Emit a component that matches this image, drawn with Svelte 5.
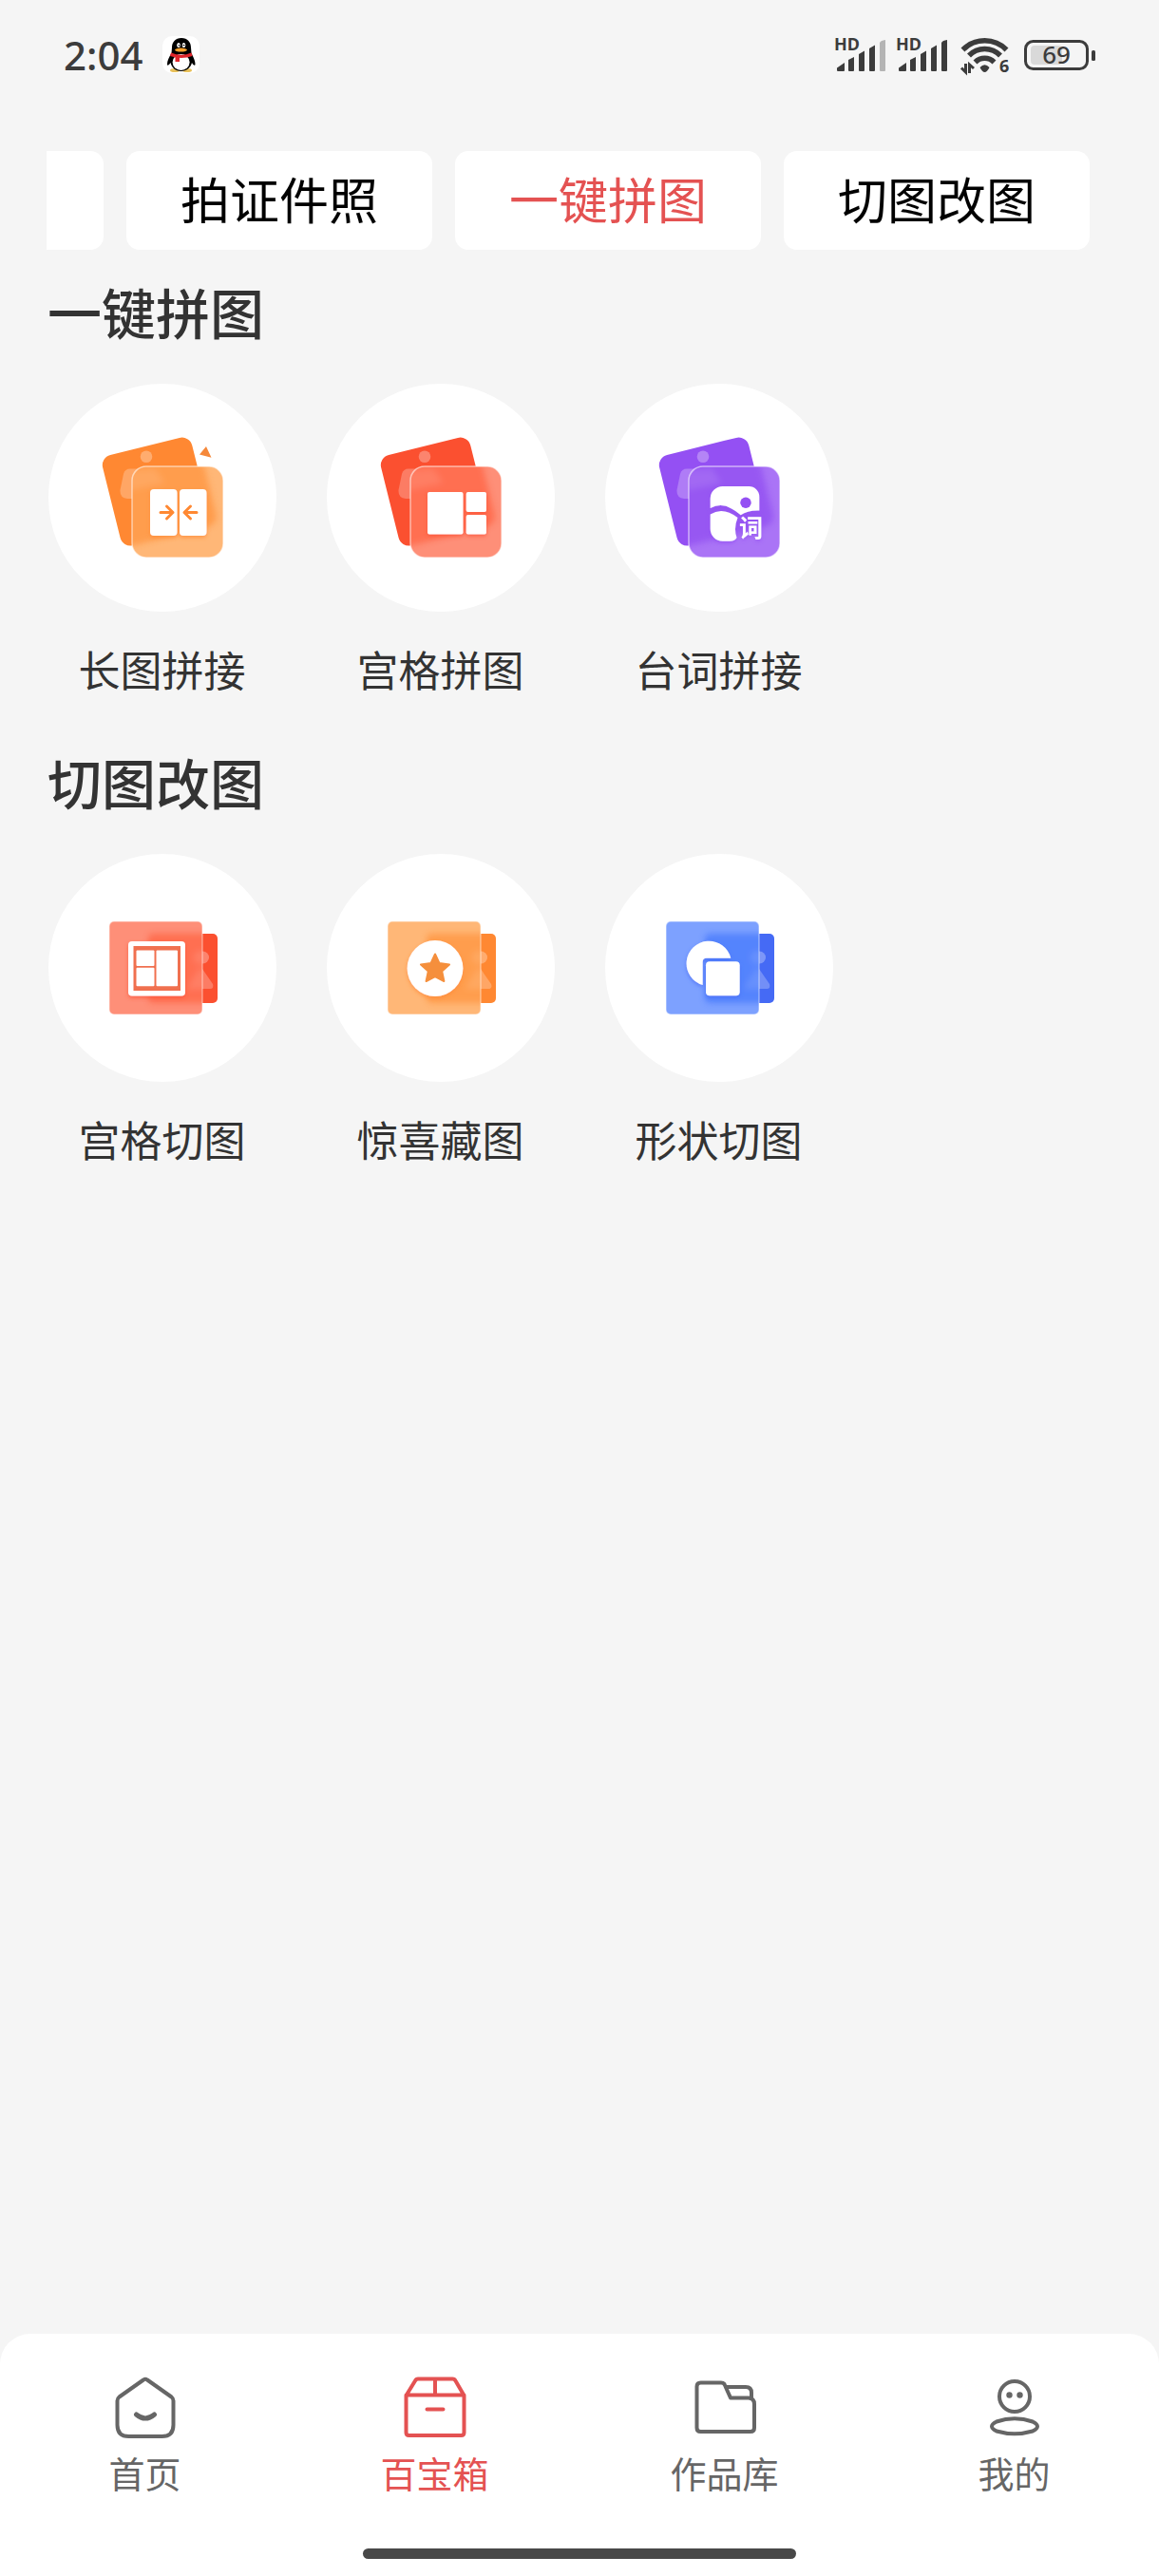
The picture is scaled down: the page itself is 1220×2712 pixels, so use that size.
<script>
  let activeTab = "puzzle";
  let activePage = "toolbox";

  const tabs = [
    { id: "hot", name: "", hint: "更多工具" },
    { id: "photo", name: "拍证件照" },
    { id: "puzzle", name: "一键拼图" },
    { id: "cut", name: "切图改图" },
  ];

  const orange = { dark: "#ff8832", light: "#ffb777", mid: "#ff9038" };
  const red = { dark: "#fb5030", light: "#fe8f78", mid: "#ff5f3e" };
  const purple = { dark: "#9450f3", light: "#aa74f6", mid: "#8e4af0" };
  const blue = { dark: "#456af5", light: "#7da1ff", mid: "#3f74fc" };

  const sections = [
    {
      title: "一键拼图",
      shape: "stack",
      tools: [
        { id: "long", name: "长图拼接", color: orange },
        { id: "grid", name: "宫格拼图", color: red },
        { id: "lines", name: "台词拼接", color: purple },
      ],
    },
    {
      title: "切图改图",
      shape: "slide",
      tools: [
        { id: "gridcut", name: "宫格切图", color: red },
        { id: "surprise", name: "惊喜藏图", color: orange },
        { id: "shapecut", name: "形状切图", color: blue },
      ],
    },
  ];

  const pages = [
    { id: "home", name: "首页" },
    { id: "toolbox", name: "百宝箱" },
    { id: "works", name: "作品库" },
    { id: "me", name: "我的" },
  ];
</script>

<div class="app">
  <header class="status">
    <span class="time">2:04</span>
    <svg class="qq" width="40" height="40" viewBox="0 0 40 40" aria-hidden="true">
      <rect width="39" height="39" rx="10" fill="#fff" />
      <ellipse cx="13" cy="36" rx="5" ry="2" fill="#e8c05a" />
      <ellipse cx="26" cy="36" rx="5" ry="2" fill="#e8c05a" />
      <path
        d="M20 2C13.500 2 10 6.500 10 12L9.500 18C7 22 5 26 5 29.500C5 31.500 6.500 31 8.500 28C9.500 33 14 37 19.600 37C25 37 30 33 31 28C32.500 31 34.500 31.500 34.500 29.500C34.500 26 32.500 22 30.500 18L30 12C30 6.500 26.500 2 20 2Z"
        fill="#000"
      />
      <ellipse cx="19.600" cy="27.500" rx="9" ry="8.500" fill="#fff" />
      <path d="M9 17.500Q20 22 30.500 17.500L31.500 21Q20 25 8 21Z" fill="#e0252b" />
      <path d="M13.500 21H18V27H13.500Z" fill="#e0252b" />
      <ellipse cx="17" cy="9.500" rx="1.800" ry="2.600" fill="#fff" />
      <ellipse cx="22.500" cy="9.500" rx="1.800" ry="2.600" fill="#fff" />
      <circle cx="17.500" cy="9.800" r="0.800" fill="#000" />
      <path d="M21.500 9.500H23.500" stroke="#000" />
      <ellipse cx="19.500" cy="14.600" rx="6.500" ry="2" fill="#f5a02c" />
    </svg>

    <div class="signals" aria-hidden="true">
      {#each [0.35, 1] as last}
        <svg width="55" height="40" viewBox="0 0 55 40">
          <text x="0" y="15" class="hd">HD</text>
          <g fill="#3c3c3c">
            <path d="M3 36V33.500L11 28V36Q11 37 10 37H4Q3 37 3 36Z" />
            <path d="M15 36V25L21 22V36Q21 37 20 37H16Q15 37 15 36Z" />
            <path d="M26 36V19L32 15.500V36Q32 37 31 37H27Q26 37 26 36Z" />
            <path d="M37 36V13L43 9.500V36Q43 37 42 37H38Q37 37 37 36Z" />
            <path
              d="M48 36V7Q49 4.500 54 4V36Q54 37 53 37H49Q48 37 48 36Z"
              opacity={last}
            />
          </g>
        </svg>
      {/each}
      <svg class="wifi" width="52" height="40" viewBox="0 0 52 40">
        <g fill="none" stroke="#3c3c3c" stroke-width="5.500">
          <path d="M2.500 14.500A32 32 0 0 1 48.500 14.500" />
          <path d="M9 20.500A23 23 0 0 1 42 20.500" />
          <path d="M15.500 27.500A14 14 0 0 1 35.500 27.500" />
        </g>
        <path
          d="M20.500 33Q25.500 27.500 30.500 33Q28 38 25.500 38Q23 38 20.500 33Z"
          fill="#3c3c3c"
        />
        <path
          d="M1 33.500L5.500 38V29M9.500 39V30L14 34"
          fill="none"
          stroke="#3c3c3c"
          stroke-width="3"
        />
        <text x="41" y="38" class="six">6</text>
      </svg>
      <svg class="battery" width="75" height="32" viewBox="0 0 75 32">
        <rect x="7" y="6" width="33" height="20" rx="4" fill="#d9d9d9" />
        <rect
          x="1.500"
          y="1.500"
          width="65"
          height="29"
          rx="8"
          fill="none"
          stroke="#3c3c3c"
          stroke-width="3"
        />
        <rect x="71" y="11" width="4" height="11" rx="1.500" fill="#3c3c3c" />
        <text x="34" y="25" class="level">69</text>
      </svg>
    </div>
  </header>

  <div class="tabs">
    {#each tabs as tab}
      <button
        class="tab"
        class:active={activeTab === tab.id}
        aria-label={tab.hint}
        on:click={() => (activeTab = tab.id)}>{tab.name}</button
      >
    {/each}
  </div>

  <main>
    {#each sections as section}
      <section>
        <h2>{section.title}</h2>
        <div class="tools">
          {#each section.tools as tool}
            <button class="tool">
              <svg
                class="disc"
                width="240"
                height="240"
                viewBox="0 0 240 240"
                aria-hidden="true"
              >
                <defs>
                  <filter id="blur-{tool.id}">
                    <feGaussianBlur stdDeviation="3" />
                  </filter>
                  <filter id="shadow-{tool.id}" x="-20%" y="-20%" width="140%" height="150%">
                    <feDropShadow
                      dx="0"
                      dy="2"
                      stdDeviation="2"
                      flood-color={tool.color.dark}
                      flood-opacity="0.7"
                    />
                  </filter>
                  <clipPath id="glass-{tool.id}">
                    {#if section.shape === "stack"}
                      <rect x="88" y="87" width="96" height="96" rx="15" />
                    {:else}
                      <rect x="64" y="71" width="98" height="98" rx="5" />
                    {/if}
                  </clipPath>
                </defs>

                {#if section.shape === "stack"}
                  <rect
                    width="97"
                    height="98"
                    rx="11"
                    fill={tool.color.dark}
                    transform="translate(54.500 77.700) rotate(-14)"
                  />
                  <circle cx="103" cy="76.700" r="6.300" fill="#fff" opacity="0.3" />
                  <path
                    d="M86 89.500H98V121H83Q75 120 75.500 112L79 95Q80.500 89.500 86 89.500Z"
                    fill="#fff"
                    opacity="0.25"
                  />
                  <g clip-path="url(#glass-{tool.id})">
                    <rect x="88" y="87" width="96" height="96" fill={tool.color.light} />
                    <g filter="url(#blur-{tool.id})" opacity="0.65">
                      <rect
                        width="104"
                        height="98"
                        rx="11"
                        fill={tool.color.mid}
                        transform="translate(54.500 77.700) rotate(-14)"
                      />
                      <path d="M80 92L112 90L122 104L86 112Z" fill="#fff" opacity="0.14" />
                    </g>
                  </g>
                  <rect
                    x="88"
                    y="87"
                    width="96"
                    height="96"
                    rx="15"
                    fill="none"
                    stroke="#fff"
                    stroke-opacity="0.55"
                    stroke-width="1.500"
                  />
                {:else}
                  <rect x="105" y="84" width="73" height="73" rx="5" fill={tool.color.dark} />
                  <circle cx="162.500" cy="109" r="6.500" fill="#fff" opacity="0.3" />
                  <path
                    d="M162 121L173 137Q174.500 142 170 142H160Z"
                    fill="#fff"
                    opacity="0.25"
                  />
                  <g clip-path="url(#glass-{tool.id})">
                    <rect x="64" y="71" width="98" height="98" fill={tool.color.light} />
                    <g filter="url(#blur-{tool.id})" opacity="0.65">
                      <rect x="105" y="84" width="73" height="73" rx="5" fill={tool.color.mid} />
                      <circle cx="160" cy="109" r="7" fill="#fff" opacity="0.15" />
                      <path d="M160 119L174 142H146Z" fill="#fff" opacity="0.15" />
                    </g>
                  </g>
                  <rect
                    x="64"
                    y="71"
                    width="98"
                    height="98"
                    rx="5"
                    fill="none"
                    stroke="#fff"
                    stroke-opacity="0.4"
                    stroke-width="1.500"
                  />
                {/if}

                <g fill="#fff" filter="url(#shadow-{tool.id})">
                  {#if tool.id === "long"}
                    <rect x="107" y="111" width="28.500" height="49" rx="4" />
                    <rect x="138" y="111" width="28.500" height="49" rx="4" />
                  {:else if tool.id === "grid"}
                    <rect x="106" y="114" width="37.500" height="44.500" rx="2" />
                    <rect x="146.700" y="114" width="21.300" height="21" rx="2" />
                    <rect x="146.700" y="138" width="21.300" height="20.500" rx="2" />
                  {:else if tool.id === "lines"}
                    <path
                      d="M110.700 131V121A13 13 0 0 1 123.700 108H151.300A11 11 0 0 1 162.300 119V133.500Q150 133 142.700 138.300Q138 134 133 131.500Q122 125 110.700 131Z"
                    />
                    <path
                      d="M110.700 137.500Q124 129 139.500 141Q135 152 138.500 162Q137 165.700 131 165.700H124A13 13 0 0 1 110.700 152.500Z"
                    />
                    <text x="141" y="161" class="word">词</text>
                  {:else if tool.id === "gridcut"}
                    <rect x="84" y="92" width="60" height="57.500" rx="4" />
                  {:else if tool.id === "surprise"}
                    <circle cx="114" cy="120.500" r="29.400" />
                  {:else}
                    <path
                      d="M102.700 138.100A23.700 23.700 0 1 1 132.300 109.700H106.700Q102.700 109.700 102.700 113.700Z"
                    />
                    <rect x="106" y="113.300" width="35.700" height="36" rx="4" />
                  {/if}
                </g>

                {#if tool.id === "long"}
                  <path
                    d="M118 135.500H131M124.500 129L131 135.500L124.500 142M156 135.500H143M149.500 129L143 135.500L149.500 142"
                    fill="none"
                    stroke={tool.color.dark}
                    stroke-width="3"
                    stroke-linecap="round"
                    stroke-linejoin="round"
                  />
                  <path d="M159 74.500L166 66L171.500 77.700Z" fill="#f5883a" />
                {:else if tool.id === "lines"}
                  <circle cx="148" cy="125.300" r="5.700" fill={tool.color.dark} />
                {:else if tool.id === "gridcut"}
                  <rect x="89.500" y="97" width="49.500" height="47" fill="#f0704f" />
                  <g fill="#fff">
                    <rect x="92.500" y="101.500" width="19" height="16.500" rx="1" />
                    <rect x="92.500" y="119.700" width="19" height="19.500" rx="1" />
                    <rect x="113.500" y="101.500" width="22.500" height="37.700" rx="1" />
                  </g>
                {:else if tool.id === "surprise"}
                  <path
                    d="M114 105.500L118.400 115L129 116.500L121.200 123.500L123.400 134L114 129L104.600 134L106.800 123.500L99 116.500L109.600 115Z"
                    fill="#f58f3c"
                    stroke="#f58f3c"
                    stroke-width="2"
                    stroke-linejoin="round"
                  />
                {/if}
              </svg>
              <span>{tool.name}</span>
            </button>
          {/each}
        </div>
      </section>
    {/each}
  </main>

  <footer>
    <nav>
      {#each pages as page}
        <button
          class="page"
          class:active={activePage === page.id}
          on:click={() => (activePage = page.id)}
        >
          <svg
            width="80"
            height="80"
            viewBox="0 0 80 80"
            fill="none"
            stroke="currentColor"
            stroke-width="4"
            stroke-linecap="round"
            stroke-linejoin="round"
            aria-hidden="true"
          >
            {#if page.id === "home"}
              <path
                d="M38 10.500Q40 9 42 10.500L67.500 28.500Q69.500 30 69.500 32.500V58Q69.500 70 57.500 70H22.500Q10.500 70 10.500 58V32.500Q10.500 30 12.500 28.500Z"
              />
              <path d="M30.500 47Q40 55 49.500 47" stroke-width="5" />
            {:else if page.id === "toolbox"}
              <path
                d="M9.500 27L19 11.500Q20 9.500 22 9.500H58.500Q60.500 9.500 61.500 11.500L70.500 27V66Q70.500 69 67.500 69H12.500Q9.500 69 9.500 66ZM9.500 26.500H70.500M40 10V26M31.500 41.500H48.500"
              />
            {:else if page.id === "works"}
              <path
                d="M14.500 13.500H36Q39 13.500 40 16L46 29.500H65Q71 30 71 36V61Q71 65 67 65H14.500Q10.500 65 10.500 61V17.500Q10.500 13.500 14.500 13.500Z"
              />
              <path d="M41.500 18H62Q68 18 68 24V30" />
            {:else}
              <circle cx="40" cy="28" r="16" />
              <path
                d="M16 59.500Q16 57 21 54.500Q40 48 59 54.500Q64 57 64 59.500Q64 62 59 64.500Q40 70 21 64.500Q16 62 16 59.500Z"
              />
              <g fill="currentColor" stroke="none">
                <circle cx="34.500" cy="26.500" r="3.200" />
                <circle cx="45.500" cy="26.500" r="3.200" />
              </g>
            {/if}
          </svg>
          <span>{page.name}</span>
        </button>
      {/each}
    </nav>
    <div class="home-bar"></div>
  </footer>
</div>

<style>
  :global(body) {
    margin: 0;
    background: #f5f5f5;
  }

  .app {
    min-height: 100vh;
    display: flex;
    flex-direction: column;
    background: #f5f5f5;
    color: #333;
    font-family: "Noto Sans CJK SC", "Noto Sans", sans-serif;
  }

  button {
    border: none;
    margin: 0;
    padding: 0;
    background: none;
    color: inherit;
    font-family: inherit;
    cursor: pointer;
  }

  .status {
    display: flex;
    align-items: center;
    height: 116px;
    padding: 0 67px;
  }

  .time {
    font-family: "Noto Sans", sans-serif;
    font-size: 42px;
    font-weight: 500;
    line-height: 56px;
    color: #3c3c3c;
  }

  .qq {
    margin-left: 20px;
  }

  .signals {
    display: flex;
    align-items: center;
    gap: 10px;
    margin-left: auto;
  }

  .signals svg {
    overflow: visible;
  }

  .wifi {
    margin-left: 3px;
  }

  .battery {
    margin-left: 5px;
  }

  .hd,
  .six,
  .level {
    font-family: "Noto Sans", sans-serif;
    font-size: 18px;
    font-weight: 700;
    fill: #3c3c3c;
  }

  .level {
    font-size: 26px;
    font-weight: 500;
    text-anchor: middle;
  }

  .tabs {
    display: flex;
    justify-content: flex-end;
    margin: 43px 49px 0;
    overflow: hidden;
  }

  .tab {
    flex: none;
    min-width: 322px;
    height: 104px;
    margin-right: 24px;
    padding-bottom: 4px;
    border-radius: 14px;
    background: #fff;
    color: #000;
    font-size: 52px;
    line-height: 64px;
  }

  .tab.active {
    color: #e45252;
  }

  main {
    flex: 1;
    display: flex;
    flex-direction: column;
    gap: 60px;
    padding: 32px 24px 60px;
  }

  h2 {
    margin: 0 26px 45px;
    font-size: 57px;
    font-weight: 500;
    line-height: 64px;
  }

  .tools {
    display: grid;
    grid-template-columns: repeat(4, 1fr);
  }

  .tool {
    display: flex;
    flex-direction: column;
    align-items: center;
    gap: 35px;
    font-size: 44px;
    line-height: 51px;
  }

  .disc {
    border-radius: 50%;
    background: #fff;
  }

  .word {
    font-family: "Noto Sans CJK SC", sans-serif;
    font-size: 25px;
    font-weight: 700;
  }

  footer {
    padding: 38px 0 18px;
    border-radius: 32px 32px 0 0;
    background: #fff;
  }

  nav {
    display: grid;
    grid-template-columns: repeat(4, 1fr);
  }

  .page {
    display: flex;
    flex-direction: column;
    align-items: center;
    gap: 4px;
    color: #666;
    font-size: 38px;
    line-height: 48px;
  }

  .page.active {
    color: #e45252;
  }

  .home-bar {
    width: 456px;
    height: 11px;
    margin: 56px auto 0;
    border-radius: 6px;
    background: #484848;
  }
</style>
